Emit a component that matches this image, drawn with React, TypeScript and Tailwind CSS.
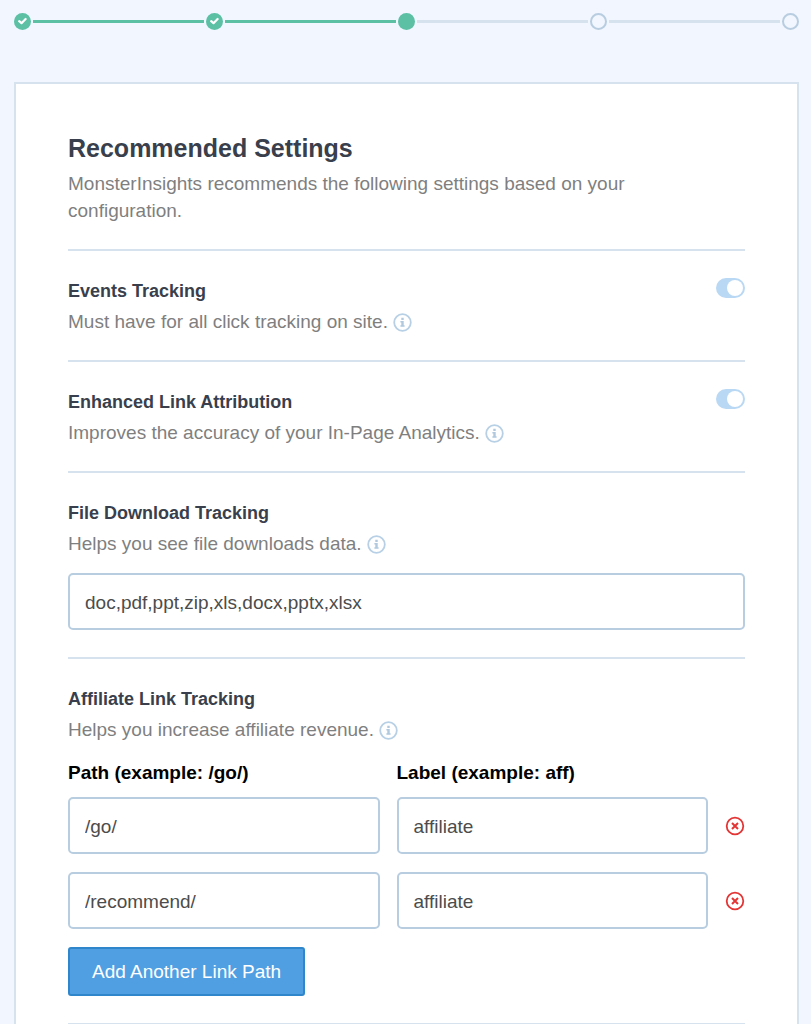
import { Fragment, useState } from 'react'
import type { ReactNode } from 'react'
import { clsx } from 'clsx'

const steps = ['done', 'done', 'current', 'todo', 'todo']

const inputClass =
  'block w-full h-[57px] rounded-[5px] border-2 border-[#b8cde0] bg-white px-[15px] pt-[2px] text-[19px] text-[#4c4c4c] outline-none focus:border-[#509fe2]'

function Steps() {
  return (
    <ol className="flex items-center h-[43px]">
      {steps.map((status, i) => (
        <Fragment key={i}>
          {i > 0 && (
            <li
              aria-hidden="true"
              className={clsx('flex-1 h-[3px] mx-[2px]', i < 3 ? 'bg-[#5cc0a5]' : 'bg-[#d6e2ed]')}
            />
          )}
          <li
            className={clsx(
              'flex items-center justify-center w-[17px] h-[17px] rounded-full',
              status === 'todo' ? 'border-2 border-[#b8cde0]' : 'bg-[#5cc0a5]'
            )}
          >
            {status === 'done' && (
              <svg viewBox="0 0 9 9" className="w-[9px] h-[9px]" fill="none" stroke="#fff" strokeWidth="2.2">
                <path d="M1.2 4.2 3.5 6.2 7.6 2" strokeLinecap="round" strokeLinejoin="round" />
              </svg>
            )}
          </li>
        </Fragment>
      ))}
    </ol>
  )
}

function InfoIcon() {
  return (
    <svg viewBox="0 0 19 19" className="inline-block w-[19px] h-[19px] ml-[5px] align-[-4px]" aria-label="More info">
      <circle cx="9.5" cy="9.5" r="8.3" fill="none" stroke="#b8d0e5" strokeWidth="1.8" />
      <path
        d="M8.3 4.8h2.4v2.1H8.3zM7.4 7.9h3.3v4.3h.9v1.6H7.4v-1.6h.9V9.5h-.9z"
        fill="#b0c9df"
      />
    </svg>
  )
}

function RemoveIcon() {
  return (
    <svg viewBox="0 0 20 20" className="w-5 h-5" fill="none" stroke="#e43535">
      <circle cx="10" cy="10" r="8.3" strokeWidth="1.8" />
      <path d="M7 7l6 6M13 7l-6 6" strokeWidth="2" />
    </svg>
  )
}

function Toggle({ id }: { id: string }) {
  return (
    <input
      id={id}
      type="checkbox"
      defaultChecked
      className="shrink-0 appearance-none w-[29px] h-5 rounded-full bg-[#d6e2ed] p-[2px] checked:bg-[#b9d8f4] before:block before:w-4 before:h-4 before:rounded-full before:bg-white checked:before:ml-auto"
    />
  )
}

type SectionProps = {
  id: string
  title: string
  description: string
  toggle?: boolean
  children?: ReactNode
}

function Section({ id, title, description, toggle, children }: SectionProps) {
  return (
    <section className={clsx('border-b-2 border-[#d6e2ed] pt-[27px]', children ? 'pb-[27px]' : 'pb-[25px]')}>
      <div className="flex items-start justify-between">
        <div>
          <label htmlFor={id} className="block mb-1 text-lg leading-[26px] font-bold text-[#393f4c]">
            {title}
          </label>
          <p className="text-[19px] leading-[27px] text-[#7f7f7f]">
            {description}
            <InfoIcon />
          </p>
        </div>
        {toggle && <Toggle id={id} />}
      </div>
      {children && <div className="mt-4">{children}</div>}
    </section>
  )
}

export default function App() {
  const [links, setLinks] = useState([
    { path: '/go/', label: 'affiliate' },
    { path: '/recommend/', label: 'affiliate' },
  ])

  const updateLink = (index: number, field: 'path' | 'label', value: string) => {
    setLinks(links.map((link, i) => (i === index ? { ...link, [field]: value } : link)))
  }

  return (
    <div className="flex flex-col min-h-screen bg-[#f1f6ff] pl-[14px] pr-3 font-['Helvetica_Neue','Liberation_Sans',Arial,sans-serif]">
      <Steps />
      <main className="flex-1 mt-[39px] border-2 border-b-0 border-[#d6e2ed] bg-white px-[52px] pt-[46px]">
        <header className="border-b-2 border-[#d6e2ed] pb-[25px]">
          <h1 className="mb-1 text-[25px] leading-9 font-bold text-[#393f4c]">Recommended Settings</h1>
          <p className="max-w-[600px] text-[19px] leading-[27px] text-[#7f7f7f]">
            MonsterInsights recommends the following settings based on your configuration.
          </p>
        </header>

        <Section id="events" title="Events Tracking" description="Must have for all click tracking on site." toggle />
        <Section
          id="attribution"
          title="Enhanced Link Attribution"
          description="Improves the accuracy of your In-Page Analytics."
          toggle
        />
        <Section id="downloads" title="File Download Tracking" description="Helps you see file downloads data.">
          <input id="downloads" type="text" defaultValue="doc,pdf,ppt,zip,xls,docx,pptx,xlsx" className={inputClass} />
        </Section>
        <Section id="path-0" title="Affiliate Link Tracking" description="Helps you increase affiliate revenue.">
          <div className="grid grid-cols-[1fr_1fr_20px] gap-x-[17px] mb-[11px] text-[19px] leading-[27px] font-bold text-black">
            <span id="path-label">Path (example: /go/)</span>
            <span id="name-label">Label (example: aff)</span>
          </div>
          <div className="space-y-[18px]">
            {links.map((link, i) => (
              <div key={i} className="grid grid-cols-[1fr_1fr_20px] items-center gap-x-[17px]">
                <input
                  id={`path-${i}`}
                  type="text"
                  aria-labelledby="path-label"
                  value={link.path}
                  onChange={(e) => updateLink(i, 'path', e.target.value)}
                  className={inputClass}
                />
                <input
                  type="text"
                  aria-labelledby="name-label"
                  value={link.label}
                  onChange={(e) => updateLink(i, 'label', e.target.value)}
                  className={inputClass}
                />
                <button
                  type="button"
                  aria-label="Remove link path"
                  onClick={() => setLinks(links.filter((_, n) => n !== i))}
                >
                  <RemoveIcon />
                </button>
              </div>
            ))}
            <button
              type="button"
              onClick={() => setLinks([...links, { path: '', label: '' }])}
              className="h-[49px] rounded-[3px] border-2 border-[#2f86ca] bg-[#509fe2] px-[22px] pt-[2px] text-[19px] text-white"
            >
              Add Another Link Path
            </button>
          </div>
        </Section>
      </main>
    </div>
  )
}
